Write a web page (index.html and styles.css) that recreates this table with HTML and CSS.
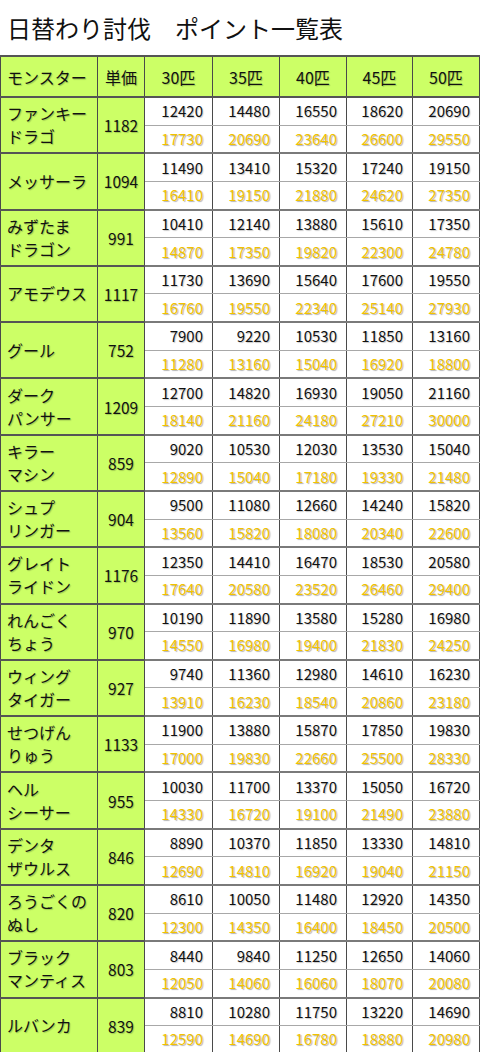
FILE: index.html
```html
<!DOCTYPE html>
<html lang="ja">
<head>
<meta charset="utf-8">
<title>日替わり討伐 ポイント一覧表</title>
<link rel="stylesheet" href="styles.css">
</head>
<body>
<h1 class="title">日替わり討伐　ポイント一覧表</h1>
<table class="points">
<colgroup>
<col class="c-name"><col class="c-price"><col class="c-n68"><col class="c-n67"><col class="c-n67"><col class="c-n66"><col class="c-n67">
</colgroup>
<thead>
<tr class="head"><th class="h-name">モンスター</th><th>単価</th><th>30匹</th><th>35匹</th><th>40匹</th><th>45匹</th><th>50匹</th></tr>
</thead>
<tbody>
<tr class="top"><th class="name" rowspan="2">ファンキー<br>ドラゴ</th><th class="price" rowspan="2">1182</th><td>12420</td><td>14480</td><td>16550</td><td>18620</td><td>20690</td></tr>
<tr class="bot"><td>17730</td><td>20690</td><td>23640</td><td>26600</td><td>29550</td></tr>
<tr class="top"><th class="name" rowspan="2">メッサーラ</th><th class="price" rowspan="2">1094</th><td>11490</td><td>13410</td><td>15320</td><td>17240</td><td>19150</td></tr>
<tr class="bot"><td>16410</td><td>19150</td><td>21880</td><td>24620</td><td>27350</td></tr>
<tr class="top"><th class="name" rowspan="2">みずたま<br>ドラゴン</th><th class="price" rowspan="2">991</th><td>10410</td><td>12140</td><td>13880</td><td>15610</td><td>17350</td></tr>
<tr class="bot"><td>14870</td><td>17350</td><td>19820</td><td>22300</td><td>24780</td></tr>
<tr class="top"><th class="name" rowspan="2">アモデウス</th><th class="price" rowspan="2">1117</th><td>11730</td><td>13690</td><td>15640</td><td>17600</td><td>19550</td></tr>
<tr class="bot"><td>16760</td><td>19550</td><td>22340</td><td>25140</td><td>27930</td></tr>
<tr class="top"><th class="name" rowspan="2">グール</th><th class="price" rowspan="2">752</th><td>7900</td><td>9220</td><td>10530</td><td>11850</td><td>13160</td></tr>
<tr class="bot"><td>11280</td><td>13160</td><td>15040</td><td>16920</td><td>18800</td></tr>
<tr class="top"><th class="name" rowspan="2">ダーク<br>パンサー</th><th class="price" rowspan="2">1209</th><td>12700</td><td>14820</td><td>16930</td><td>19050</td><td>21160</td></tr>
<tr class="bot"><td>18140</td><td>21160</td><td>24180</td><td>27210</td><td>30000</td></tr>
<tr class="top"><th class="name" rowspan="2">キラー<br>マシン</th><th class="price" rowspan="2">859</th><td>9020</td><td>10530</td><td>12030</td><td>13530</td><td>15040</td></tr>
<tr class="bot"><td>12890</td><td>15040</td><td>17180</td><td>19330</td><td>21480</td></tr>
<tr class="top"><th class="name" rowspan="2">シュプ<br>リンガー</th><th class="price" rowspan="2">904</th><td>9500</td><td>11080</td><td>12660</td><td>14240</td><td>15820</td></tr>
<tr class="bot"><td>13560</td><td>15820</td><td>18080</td><td>20340</td><td>22600</td></tr>
<tr class="top"><th class="name" rowspan="2">グレイト<br>ライドン</th><th class="price" rowspan="2">1176</th><td>12350</td><td>14410</td><td>16470</td><td>18530</td><td>20580</td></tr>
<tr class="bot"><td>17640</td><td>20580</td><td>23520</td><td>26460</td><td>29400</td></tr>
<tr class="top"><th class="name" rowspan="2">れんごく<br>ちょう</th><th class="price" rowspan="2">970</th><td>10190</td><td>11890</td><td>13580</td><td>15280</td><td>16980</td></tr>
<tr class="bot"><td>14550</td><td>16980</td><td>19400</td><td>21830</td><td>24250</td></tr>
<tr class="top"><th class="name" rowspan="2">ウィング<br>タイガー</th><th class="price" rowspan="2">927</th><td>9740</td><td>11360</td><td>12980</td><td>14610</td><td>16230</td></tr>
<tr class="bot"><td>13910</td><td>16230</td><td>18540</td><td>20860</td><td>23180</td></tr>
<tr class="top"><th class="name" rowspan="2">せつげん<br>りゅう</th><th class="price" rowspan="2">1133</th><td>11900</td><td>13880</td><td>15870</td><td>17850</td><td>19830</td></tr>
<tr class="bot"><td>17000</td><td>19830</td><td>22660</td><td>25500</td><td>28330</td></tr>
<tr class="top"><th class="name" rowspan="2">ヘル<br>シーサー</th><th class="price" rowspan="2">955</th><td>10030</td><td>11700</td><td>13370</td><td>15050</td><td>16720</td></tr>
<tr class="bot"><td>14330</td><td>16720</td><td>19100</td><td>21490</td><td>23880</td></tr>
<tr class="top"><th class="name" rowspan="2">デンタ<br>ザウルス</th><th class="price" rowspan="2">846</th><td>8890</td><td>10370</td><td>11850</td><td>13330</td><td>14810</td></tr>
<tr class="bot"><td>12690</td><td>14810</td><td>16920</td><td>19040</td><td>21150</td></tr>
<tr class="top"><th class="name" rowspan="2">ろうごくの<br>ぬし</th><th class="price" rowspan="2">820</th><td>8610</td><td>10050</td><td>11480</td><td>12920</td><td>14350</td></tr>
<tr class="bot"><td>12300</td><td>14350</td><td>16400</td><td>18450</td><td>20500</td></tr>
<tr class="top"><th class="name" rowspan="2">ブラック<br>マンティス</th><th class="price" rowspan="2">803</th><td>8440</td><td>9840</td><td>11250</td><td>12650</td><td>14060</td></tr>
<tr class="bot"><td>12050</td><td>14060</td><td>16060</td><td>18070</td><td>20080</td></tr>
<tr class="top"><th class="name" rowspan="2">ルバンカ</th><th class="price" rowspan="2">839</th><td>8810</td><td>10280</td><td>11750</td><td>13220</td><td>14690</td></tr>
<tr class="bot"><td>12590</td><td>14690</td><td>16780</td><td>18880</td><td>20980</td></tr>
</tbody>
</table>
</body>
</html>
```
FILE: styles.css
```css
html, body {
  margin: 0;
  padding: 0;
  background: #ffffff;
}
body {
  font-family: "Noto Sans CJK JP", "Noto Sans", sans-serif;
  color: #111;
  width: 480px;
}
.title {
  margin: 0;
  height: 55px;
  box-sizing: border-box;
  padding: 10px 0 0 7px;
  font-size: 24px;
  line-height: 36px;
  font-weight: 400;
  color: #111;
}
.points {
  border-collapse: collapse;
  table-layout: fixed;
  width: 480px;
  font-size: 15px;
}
.c-name { width: 97px; }
.c-price { width: 47px; }
.c-n68 { width: 68px; }
.c-n67 { width: 67px; }
.c-n66 { width: 66px; }
.points th, .points td {
  padding: 0;
  border-left: 1px solid #4a4a4a;
  border-right: 1px solid #4a4a4a;
  text-shadow: 1px 1px 1px rgba(0, 0, 0, 0.22);
  font-weight: 400;
  line-height: 22px;
  overflow: hidden;
  white-space: nowrap;
}
.points .head th {
  background: #ccff66;
  height: 39px;
  text-align: center;
  border-top: 2px solid #555;
  border-bottom: 2px solid #555;
  font-size: 16px;
}
.points .head .h-name {
  text-align: left;
  padding-left: 6px;
}
.points .name, .points .price {
  background: #ccff66;
  border-bottom: 2px solid #555;
}
.points .name {
  text-align: left;
  padding-left: 6px;
  font-size: 16px;
  line-height: 23px;
}
.points .price {
  text-align: center;
  font-size: 15.5px;
}
.top, .bot {
  height: 28.15px;
}
.points .top td {
  border-bottom: 1px solid #a8a8a8;
  color: #111;
  text-align: right;
  padding-right: 9px;
}
.points .bot td {
  border-bottom: 2px solid #7a7a7a;
  color: #f2c200;
  text-align: right;
  padding-right: 9px;
  text-shadow: 1px 1px 1px rgba(0, 0, 0, 0.3);
}
```
